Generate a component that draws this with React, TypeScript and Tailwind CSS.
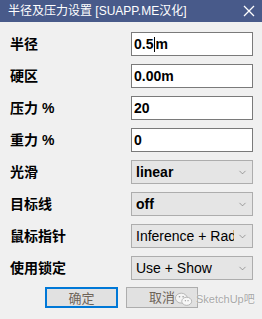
import { ChevronDown } from 'lucide-react'

const labelFont = "font-['Liberation_Sans','Noto_Sans_CJK_SC',sans-serif]"

function Row({ label, children }: { label: string; children: React.ReactNode }) {
  return (
    <div className="flex items-center h-[24px]">
      <div className={`w-[131px] pl-[10px] text-[14px] font-bold text-black ${labelFont}`}>{label}</div>
      {children}
    </div>
  )
}

function TextBox({ value, caret }: { value: string; caret?: boolean }) {
  return (
    <div className="w-[122px] h-[24px] border border-[#7a7a7a] bg-white flex items-center pl-[2px] text-[14px] font-bold text-black font-['Liberation_Sans',sans-serif]">
      {caret ? (
        <>
          0.5<span className="inline-block w-px h-[15px] bg-black mx-[0.5px]" />m
        </>
      ) : (
        value
      )}
    </div>
  )
}

function Select({ value, bold }: { value: string; bold?: boolean }) {
  return (
    <div className="w-[122px] h-[24px] border border-[#adadad] bg-[#e5e5e5] flex items-center pl-[4px] pr-[4px] text-[14px] text-black font-['Liberation_Sans',sans-serif]">
      <span className={`flex-1 overflow-hidden whitespace-nowrap ${bold ? 'font-bold' : ''}`}>{value}</span>
      <ChevronDown size={11} strokeWidth={1.4} className="text-[#707070] shrink-0 ml-[3px]" />
    </div>
  )
}

export default function App() {
  return (
    <div className="relative w-[262px] h-[319px] bg-[#f0f0f0] overflow-hidden">
      <div className="h-[22px] bg-[#485a8a] flex items-center justify-between pl-[8px] pr-[5px]">
        <span className={`text-white text-[12px] ${labelFont}`}>半径及压力设置 [SUAPP.ME汉化]</span>
        <svg width="14" height="14" viewBox="0 0 14 14" className="mr-[1px]">
          <path d="M2 2 L12 12 M12 2 L2 12" stroke="white" strokeWidth="1.3" />
        </svg>
      </div>
      <div className="flex flex-col gap-[8px] pt-[10px]">
        <Row label="半径"><TextBox value="0.5m" caret /></Row>
        <Row label="硬区"><TextBox value="0.00m" /></Row>
        <Row label="压力 %"><TextBox value="20" /></Row>
        <Row label="重力 %"><TextBox value="0" /></Row>
        <Row label="光滑"><Select value="linear" bold /></Row>
        <Row label="目标线"><Select value="off" bold /></Row>
        <Row label="鼠标指针"><Select value="Inference + Radius" /></Row>
        <Row label="使用锁定"><Select value="Use + Show" /></Row>
      </div>
      <div className="flex gap-[8px] pl-[45px] mt-[7px]">
        <button className={`w-[73px] h-[21px] border-2 border-[#0078d7] bg-[#e1e1e1] text-[13px] text-[#6e6459] ${labelFont}`}>确定</button>
        <button className={`w-[72px] h-[21px] border border-[#adadad] bg-[#e1e1e1] text-[13px] text-[#6e6459] ${labelFont}`}>取消</button>
      </div>
      <div className="absolute left-[175px] top-[291px] flex items-center gap-[3px] whitespace-nowrap">
        <svg width="18" height="15" viewBox="0 0 20 16">
          <ellipse cx="7" cy="6.5" rx="6.5" ry="5.5" fill="#f4f4f4" stroke="#b0b0b0" strokeWidth="1" />
          <ellipse cx="13" cy="10" rx="5.5" ry="4.5" fill="#f8f8f8" stroke="#b0b0b0" strokeWidth="1" />
          <circle cx="5" cy="5" r="0.9" fill="#999" />
          <circle cx="9" cy="5" r="0.9" fill="#999" />
          <circle cx="11.5" cy="9.3" r="0.7" fill="#999" />
          <circle cx="14.5" cy="9.3" r="0.7" fill="#999" />
        </svg>
        <span className={`text-[11px] text-[#a8a8a8] ${labelFont} [text-shadow:0_0_2px_#fff]`}>SketchUp吧</span>
      </div>
    </div>
  )
}
